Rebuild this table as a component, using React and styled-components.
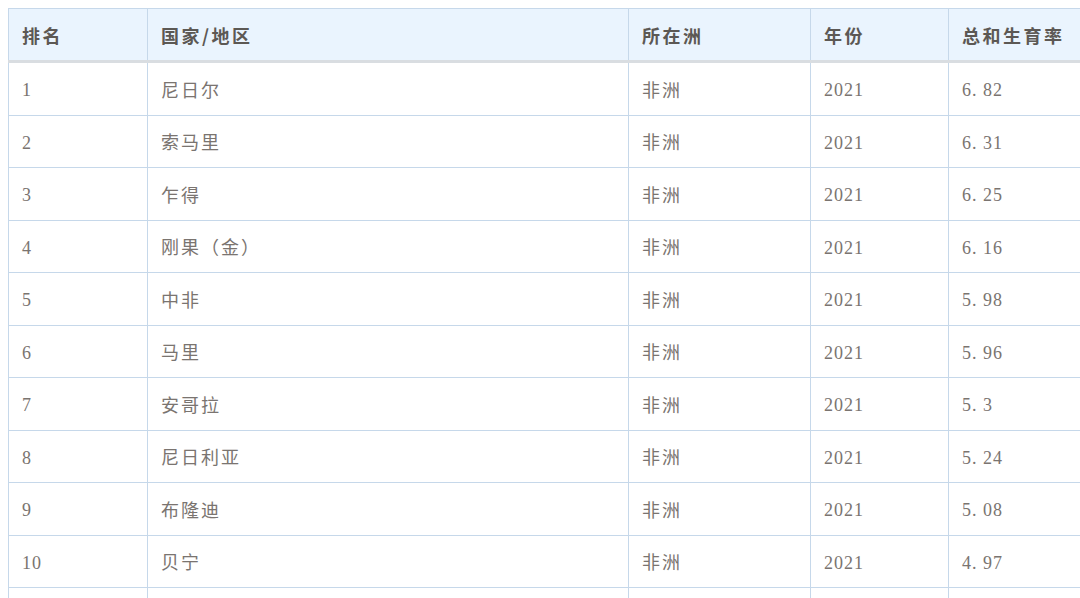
import React from "react";
import styled, { createGlobalStyle } from "styled-components";

const Global = createGlobalStyle`
  html, body { margin: 0; padding: 0; background: #ffffff; overflow: hidden; }
  body { font-family: "Liberation Serif", "Noto Sans CJK SC", serif; }
`;

const Page = styled.div`
  padding: 8px 0 0 8px;
  width: 1300px;
`;

const Table = styled.table`
  border-collapse: collapse;
  table-layout: fixed;
  width: 1140px;
  font-size: 18px;
`;

const HeadCell = styled.th`
  height: 51px;
  padding: 0 13px;
  text-align: left;
  font-weight: 700;
  letter-spacing: 2.5px;
  color: #5c5854;
  background: #eaf4fe;
  border: 1px solid #c6d8ea;
  border-bottom: 3px solid #d9dde1;
  font-family: "Noto Sans CJK SC", serif;
`;

const Cell = styled.td`
  height: ${(p) => (p.$num ? "47.5px" : "51.5px")};
  padding: ${(p) => (p.$num ? "4px 13px 0" : "0 13px")};
  color: #7a7470;
  border: 1px solid #c6d8ea;
  white-space: nowrap;
  letter-spacing: ${(p) => (p.$num ? "1px" : "2px")};
  font-family: ${(p) =>
    p.$num
      ? '"Liberation Serif", "Noto Sans CJK SC", serif'
      : '"Noto Sans CJK SC", sans-serif'};
  font-weight: 400;
`;

const cols = [139, 481, 182, 138, 200];
const headers = ["排名", "国家/地区", "所在洲", "年份", "总和生育率"];
const rows = [
  ["1", "尼日尔", "6.82"],
  ["2", "索马里", "6.31"],
  ["3", "乍得", "6.25"],
  ["4", "刚果（金）", "6.16"],
  ["5", "中非", "5.98"],
  ["6", "马里", "5.96"],
  ["7", "安哥拉", "5.3"],
  ["8", "尼日利亚", "5.24"],
  ["9", "布隆迪", "5.08"],
  ["10", "贝宁", "4.97"],
];

export default function App() {
  return (
    <Page>
      <Global />
      <Table>
        <colgroup>
          {cols.map((w, i) => (
            <col key={i} style={{ width: w }} />
          ))}
        </colgroup>
        <thead>
          <tr>
            {headers.map((h) => (
              <HeadCell key={h}>{h}</HeadCell>
            ))}
          </tr>
        </thead>
        <tbody>
          {rows.map(([rank, name, rate]) => (
            <tr key={rank}>
              <Cell $num>{rank}</Cell>
              <Cell>{name}</Cell>
              <Cell>非洲</Cell>
              <Cell $num>2021</Cell>
              <Cell $num>{rate.replace(".", ". ")}</Cell>
            </tr>
          ))}
          <tr>
            <Cell />
            <Cell />
            <Cell />
            <Cell />
            <Cell />
          </tr>
        </tbody>
      </Table>
    </Page>
  );
}
